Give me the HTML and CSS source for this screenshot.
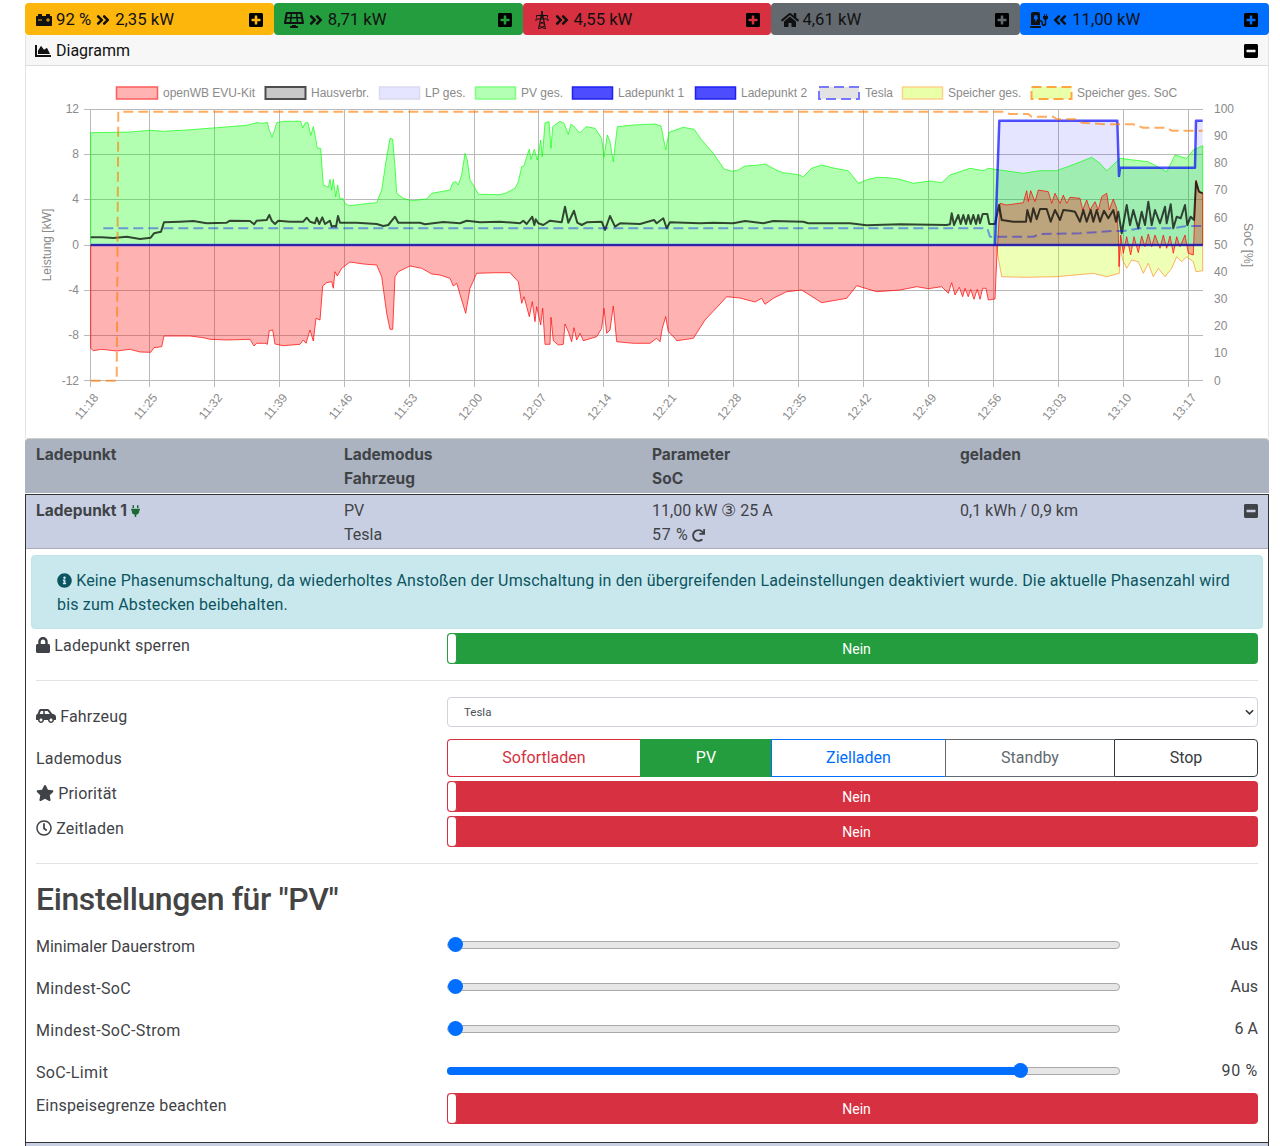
FILE: index.html
```html
<!DOCTYPE html>
<html lang="de">
<head>
    <meta charset="UTF-8">
    <meta name="viewport" content="width=device-width, initial-scale=1.0">
    <title>openWB</title>
    <link rel="stylesheet" href="styles.css">
</head>
<body>
    <svg class="icon-defs" width="0" height="0">
        <symbol id="i-battery" viewBox="0 0 512 512"><path d="M480 128h-32V80c0-8.84-7.16-16-16-16h-96c-8.84 0-16 7.16-16 16v48H192V80c0-8.84-7.16-16-16-16H80c-8.84 0-16 7.16-16 16v48H32c-17.67 0-32 14.33-32 32v256c0 17.67 14.33 32 32 32h448c17.67 0 32-14.33 32-32V160c0-17.67-14.33-32-32-32zM192 264c0 4.42-3.58 8-8 8H72c-4.42 0-8-3.58-8-8v-16c0-4.42 3.58-8 8-8h112c4.42 0 8 3.58 8 8v16zm256 0c0 4.42-3.58 8-8 8h-40v40c0 4.42-3.58 8-8 8h-16c-4.42 0-8-3.58-8-8v-40h-40c-4.42 0-8-3.58-8-8v-16c0-4.42 3.58-8 8-8h40v-40c0-4.42 3.58-8 8-8h16c4.42 0 8 3.58 8 8v40h40c4.42 0 8 3.58 8 8v16z"/></symbol>
        <symbol id="i-solar" viewBox="0 0 640 512"><path d="M431.98 448.01l-47.97.05V416h-128v32.21l-47.98.05c-8.82.01-15.97 7.16-15.98 15.99l-.05 31.73c-.01 8.85 7.17 16.03 16.02 16.02l223.96-.26c8.82-.01 15.97-7.16 15.98-15.98l.04-31.73c.01-8.85-7.17-16.03-16.02-16.02zM585.2 26.74C582.58 11.31 568.99 0 553.06 0H86.93C71 0 57.41 11.31 54.79 26.74-3.32 369.16.04 348.08.03 352c-.03 17.32 14.29 32 32.6 32h574.74c18.23 0 32.51-14.56 32.59-31.79.02-4.08 3.35 16.95-54.76-325.47zM259.83 64h120.33l9.77 96H250.06l9.77-96zm-75.17 256H71.09L90.1 208h105.97l-11.41 112zm16.29-160H98.24l16.29-96h96.19l-9.77 96zm32.82 160l11.4-112h149.65l11.4 112H233.77zm195.5-256h96.19l16.29 96H439.04l-9.77-96zm26.06 256l-11.4-112H549.9l19 112H455.33z"/></symbol>
        <symbol id="i-right" viewBox="0 0 448 512"><path d="M224.3 273l-136 136c-9.4 9.4-24.6 9.4-33.9 0l-22.6-22.6c-9.4-9.4-9.4-24.6 0-33.9l96.4-96.4-96.4-96.4c-9.4-9.4-9.4-24.6 0-33.9L54.3 103c9.4-9.4 24.6-9.4 33.9 0l136 136c9.5 9.4 9.5 24.6.1 34zm192-34l-136-136c-9.4-9.4-24.6-9.4-33.9 0l-22.6 22.6c-9.4 9.4-9.4 24.6 0 33.9l96.4 96.4-96.4 96.4c-9.4 9.4-9.4 24.6 0 33.9l22.6 22.6c9.4 9.4 24.6 9.4 33.9 0l136-136c9.4-9.2 9.4-24.4 0-33.8z"/></symbol>
        <symbol id="i-left" viewBox="0 0 448 512"><path transform="matrix(-1 0 0 1 448 0)" d="M224.3 273l-136 136c-9.4 9.4-24.6 9.4-33.9 0l-22.6-22.6c-9.4-9.4-9.4-24.6 0-33.9l96.4-96.4-96.4-96.4c-9.4-9.4-9.4-24.6 0-33.9L54.3 103c9.4-9.4 24.6-9.4 33.9 0l136 136c9.5 9.4 9.5 24.6.1 34zm192-34l-136-136c-9.4-9.4-24.6-9.4-33.9 0l-22.6 22.6c-9.4 9.4-9.4 24.6 0 33.9l96.4 96.4-96.4 96.4c-9.4 9.4-9.4 24.6 0 33.9l22.6 22.6c9.4 9.4 24.6 9.4 33.9 0l136-136c9.4-9.2 9.4-24.4 0-33.8z"/></symbol>
        <symbol id="i-home" viewBox="0 0 576 512"><path d="M280.37 148.26L96 300.11V464a16 16 0 0 0 16 16l112.06-.29a16 16 0 0 0 15.92-16V368a16 16 0 0 1 16-16h64a16 16 0 0 1 16 16v95.64a16 16 0 0 0 16 16.05L464 480a16 16 0 0 0 16-16V300L295.67 148.26a12.19 12.19 0 0 0-15.3 0zM571.6 251.47L488 182.56V44.05a12 12 0 0 0-12-12h-56a12 12 0 0 0-12 12v72.61L318.47 43a48 48 0 0 0-61 0L4.34 251.47a12 12 0 0 0-1.6 16.9l25.5 31A12 12 0 0 0 45.15 301l235.22-193.74a12.19 12.19 0 0 1 15.3 0L530.9 301a12 12 0 0 0 16.9-1.6l25.5-31a12 12 0 0 0-1.7-16.93z"/></symbol>
        <symbol id="i-station" viewBox="0 0 576 512"><path d="M336 448H16c-8.84 0-16 7.16-16 16v32c0 8.84 7.16 16 16 16h320c8.84 0 16-7.16 16-16v-32c0-8.84-7.16-16-16-16zm208-320V80c0-8.84-7.16-16-16-16s-16 7.16-16 16v48h-32V80c0-8.84-7.16-16-16-16s-16 7.16-16 16v48h-16c-8.84 0-16 7.16-16 16v32c0 35.76 23.62 65.69 56 75.93v118.49c0 13.95-9.5 26.92-23.26 29.19C431.22 402.5 416 388.99 416 372v-28c0-48.6-39.4-88-88-88h-8V64c0-35.35-28.65-64-64-64H96C60.65 0 32 28.65 32 64v352h288V304h8c22.09 0 40 17.91 40 40v24.61c0 39.67 28.92 75.16 68.41 79.01C481.71 452.05 520 416.41 520 372V251.93c32.38-10.24 56-40.17 56-75.93v-32c0-8.84-7.16-16-16-16zM260.09 175.61l-71.37 126.2c-2.53 4.47-7.02 6.19-11.16 6.19-6.98 0-13.29-4.87-11.63-11.55L181.26 232H136c-9.1 0-16.12-8.02-14.87-17.03l16-96C138.18 111.53 144.53 104 152 104h72c10.09 0 17.54 9.36 15.08 19.26L220.77 160h31.28c9.04 0 14.75 9.77 8.04 15.61z"/></symbol>
        <symbol id="i-plus" viewBox="0 0 448 512"><path d="M400 32H48C21.5 32 0 53.5 0 80v352c0 26.5 21.5 48 48 48h352c26.5 0 48-21.5 48-48V80c0-26.5-21.5-48-48-48zm-32 252c0 6.6-5.4 12-12 12h-92v92c0 6.6-5.4 12-12 12h-56c-6.6 0-12-5.4-12-12v-92H92c-6.6 0-12-5.4-12-12v-56c0-6.6 5.4-12 12-12h92v-92c0-6.6 5.4-12 12-12h56c6.6 0 12 5.4 12 12v92h92c6.6 0 12 5.4 12 12v56z"/></symbol>
        <symbol id="i-minus" viewBox="0 0 448 512"><path d="M400 32H48C21.5 32 0 53.5 0 80v352c0 26.5 21.5 48 48 48h352c26.5 0 48-21.5 48-48V80c0-26.5-21.5-48-48-48zM92 296c-6.6 0-12-5.4-12-12v-56c0-6.6 5.4-12 12-12h264c6.6 0 12 5.4 12 12v56c0 6.6-5.4 12-12 12H92z"/></symbol>
    </svg>

    <div class="page">
        <div class="topbar">
            <div class="tile tile-yellow">
                <svg class="ico wide18"><use href="#i-battery"/></svg>
                <span>92 %</span>
                <svg class="ico arrows"><use href="#i-right"/></svg>
                <span>2,35 kW</span>
                <svg class="ico toggle-ico"><use href="#i-plus"/></svg>
            </div>
            <div class="tile tile-green">
                <svg class="ico wide"><use href="#i-solar"/></svg>
                <svg class="ico arrows"><use href="#i-right"/></svg>
                <span>8,71 kW</span>
                <svg class="ico toggle-ico"><use href="#i-plus"/></svg>
            </div>
            <div class="tile tile-red">
                <svg class="ico tower" viewBox="0 0 14 18" fill="none" stroke="currentColor" stroke-width="1">
                    <path d="M7 0 3.5 18M7 0l3.5 18M1.5 4.5h11M1 8h12M1.5 4.5v2M12.5 4.5v2M1 8v2M13 8v2M5.5 4.5 8.5 8M8.5 4.5 5.5 8M5 10.5l4.5 3M9 10.5 4.5 13.5M4 14.5l6 3.5M10 14.5 4 18"/>
                </svg>
                <svg class="ico arrows"><use href="#i-right"/></svg>
                <span>4,55 kW</span>
                <svg class="ico toggle-ico"><use href="#i-plus"/></svg>
            </div>
            <div class="tile tile-grey">
                <svg class="ico home"><use href="#i-home"/></svg>
                <span>4,61 kW</span>
                <svg class="ico toggle-ico"><use href="#i-plus"/></svg>
            </div>
            <div class="tile tile-blue">
                <svg class="ico home"><use href="#i-station"/></svg>
                <svg class="ico arrows"><use href="#i-left"/></svg>
                <span>11,00 kW</span>
                <svg class="ico toggle-ico"><use href="#i-plus"/></svg>
            </div>
        </div>

        <div class="chart-card">
            <div class="chart-head">
                <svg class="ico" viewBox="0 0 512 512"><path d="M500 384c6.6 0 12 5.4 12 12v40c0 6.6-5.4 12-12 12H12c-6.6 0-12-5.4-12-12V76c0-6.6 5.4-12 12-12h40c6.6 0 12 5.4 12 12v308h436zM372.7 159.5L288 216l-85.3-113.7c-5.1-6.8-15.5-6.3-19.9 1L96 248v104h384l-89.9-187.8c-3.2-6.5-11.4-8.7-17.4-4.7z"/></svg>
                <span>Diagramm</span>
                <svg class="ico toggle-ico"><use href="#i-minus"/></svg>
            </div>
            <svg class="chart" viewBox="26 66 1242 372" width="1242" height="372">
                <!-- legend -->
                <g class="legend">
                    <rect x="116.5" y="87" width="41" height="12" fill="#ffb3b3" stroke="#ff5c5c" stroke-width="1.5"/>
                    <text x="163" y="97">openWB EVU-Kit</text>
                    <rect x="265.5" y="87" width="40" height="12" fill="#c8c8c8" stroke="#4d4d4d" stroke-width="2"/>
                    <text x="311" y="97">Hausverbr.</text>
                    <rect x="379.5" y="87" width="40" height="12" fill="#e5e5ff" stroke="#d9d9ef" stroke-width="1.5"/>
                    <text x="425" y="97">LP ges.</text>
                    <rect x="475.5" y="87" width="40" height="12" fill="#b3ffb3" stroke="#80ff80" stroke-width="1.5"/>
                    <text x="521" y="97">PV ges.</text>
                    <rect x="572.5" y="87" width="40" height="12" fill="#4d4dff" stroke="#2020f0" stroke-width="1.5"/>
                    <text x="618" y="97">Ladepunkt 1</text>
                    <rect x="695.5" y="87" width="40" height="12" fill="#4d4dff" stroke="#2020f0" stroke-width="1.5"/>
                    <text x="741" y="97">Ladepunkt 2</text>
                    <rect x="819" y="87" width="40" height="12" fill="#e3e3e3" stroke="#7878ff" stroke-width="2" stroke-dasharray="10 5"/>
                    <text x="865" y="97">Tesla</text>
                    <rect x="902.5" y="87" width="40" height="12" fill="#e9ffa8" stroke="#ffd28c" stroke-width="1.5"/>
                    <text x="948" y="97">Speicher ges.</text>
                    <rect x="1031.5" y="87" width="40" height="12" fill="#e9ffa8" stroke="#ffa640" stroke-width="2" stroke-dasharray="10 5"/>
                    <text x="1077" y="97">Speicher ges. SoC</text>
                </g>

                <!-- grid -->
                <path class="grid" d="M84 109.5H1203M84 154.5H1203M84 199.5H1203M84 245.5H1203M84 290.5H1203M84 335.5H1203M84 380.5H1203M90.5 109V387M149.5 109V387M214.5 109V387M279.5 109V387M344.5 109V387M409.5 109V387M474.5 109V387M538.5 109V387M603.5 109V387M668.5 109V387M733.5 109V387M798.5 109V387M863.5 109V387M928.5 109V387M993.5 109V387M1058.5 109V387M1123.5 109V387M1188.5 109V387"/>

                <!-- axis labels -->
                <g class="tick tick-end">
                    <text x="79" y="113">12</text>
                    <text x="79" y="158">8</text>
                    <text x="79" y="203">4</text>
                    <text x="79" y="249">0</text>
                    <text x="79" y="294">-4</text>
                    <text x="79" y="339">-8</text>
                    <text x="79" y="385">-12</text>
                </g>
                <g class="tick">
                    <text x="1214" y="113">100</text>
                    <text x="1214" y="140">90</text>
                    <text x="1214" y="167">80</text>
                    <text x="1214" y="194">70</text>
                    <text x="1214" y="222">60</text>
                    <text x="1214" y="249">50</text>
                    <text x="1214" y="276">40</text>
                    <text x="1214" y="303">30</text>
                    <text x="1214" y="330">20</text>
                    <text x="1214" y="357">10</text>
                    <text x="1214" y="385">0</text>
                </g>
                <text class="tick tick-mid" transform="translate(51 245) rotate(-90)">Leistung [kW]</text>
                <text class="tick tick-mid" transform="translate(1244 245) rotate(90)">SoC [%]</text>
                <g class="tick tick-end">
                    <text transform="translate(99 398) rotate(-50)">11:18</text>
                    <text transform="translate(158 398) rotate(-50)">11:25</text>
                    <text transform="translate(223 398) rotate(-50)">11:32</text>
                    <text transform="translate(288 398) rotate(-50)">11:39</text>
                    <text transform="translate(353 398) rotate(-50)">11:46</text>
                    <text transform="translate(418 398) rotate(-50)">11:53</text>
                    <text transform="translate(483 398) rotate(-50)">12:00</text>
                    <text transform="translate(547 398) rotate(-50)">12:07</text>
                    <text transform="translate(612 398) rotate(-50)">12:14</text>
                    <text transform="translate(677 398) rotate(-50)">12:21</text>
                    <text transform="translate(742 398) rotate(-50)">12:28</text>
                    <text transform="translate(807 398) rotate(-50)">12:35</text>
                    <text transform="translate(872 398) rotate(-50)">12:42</text>
                    <text transform="translate(937 398) rotate(-50)">12:49</text>
                    <text transform="translate(1002 398) rotate(-50)">12:56</text>
                    <text transform="translate(1067 398) rotate(-50)">13:03</text>
                    <text transform="translate(1132 398) rotate(-50)">13:10</text>
                    <text transform="translate(1197 398) rotate(-50)">13:17</text>
                </g>

                <!-- Speicher ges. -->
                <path class="area-bat" d="M996 245 1001.7,276.7 1025,277.3 1056.7,276.7 1093.3,273.3 1106.7,276.7 1119.3,273.3 1120,246.7 1122.7,260 1126.7,268.3 1131.7,260 1138.3,261.7 1143.3,273.3 1148.3,263.3 1153.3,276.7 1158.3,268.3 1165,276.7 1171.7,268.3 1176.7,256.7 1181.7,261.7 1186.7,256.7 1193.3,261.7 1196,271.7 1202.7,270.7V245Z"/>
                <!-- LP ges. -->
                <path class="area-lp" d="M995 245 999.3,120.7 1117.3,120.7 1119,176 1120,167.7 1195,167.7 1196,120.7 1202.7,120.7V245Z"/>
                <!-- PV ges. -->
                <path class="area-pv" d="M90.7,245V132.7L116.7,132.3 130,132 150,130.3 163.3,131.3 186.7,130 216.7,127.7 246.7,125.3 256.7,122.7 263.3,123.3 267.3,122.3 269.3,130 272,137.3 274,131.7 276.7,122.7 283.3,121.3 300.7,121.3 302.7,128 305.3,122.7 308,122.7 310.7,135.3 313.3,126.7 315.3,136.7 317.3,148.3 320.7,148.3 323.3,185 328.3,187.3 330,179.3 331.7,190 333.3,179.3 335.7,196.7 337.7,185 340,199.3 342.7,198.3 345,203.3 349.3,205.7 363.3,204 376.7,202.7 381.7,190 386.7,156.7 390,138.3 392.7,139.3 395,166.7 396.7,193.3 403.3,198.3 411.7,200.7 426.7,199 431.7,193.3 450,190 452.7,182.7 456,181.7 458.3,185 461.7,175 465,153.3 467.3,160 470,180 473.3,185 478.3,194.3 500,194.7 506.7,192.7 515,188.3 518.3,181.7 521.7,166.7 524,166 526.7,156.7 529.3,149.3 531,159.3 534.3,149.3 537.3,160 540.7,140 542.3,156.7 545,122.7 549,121.7 551,148.3 552.7,126.7 560,121.3 564,123.3 568.3,134.3 571,124 575,127.3 577.3,130.7 580,132.7 586,126.7 595,128.3 601.7,138.3 604,157.3 607.3,135 610,141.7 613.3,161.7 617.3,126.7 633.3,125 655,124 661,126 665.7,150 669,132.3 683.3,127.3 694,129.3 701.7,140 713.3,153.3 724,169 732.3,171.3 738.3,170 745,166 756.7,165.3 765,164 778.3,171 783.3,172.7 798.3,174.7 803.3,176.7 811.7,168.3 821.7,165 835,168.3 848.3,170.7 858.3,183.3 868.3,179.3 876.7,177.3 888.3,177.7 900,179.3 913.3,183.3 930,181 941.7,182.7 950,175 970,168.3 983.3,170.7 988.3,168.3 1000,170 1023.3,173.3 1040,170.7 1056.7,170.7 1076.7,163.3 1091.7,157.3 1100,163.3 1106.7,171 1120,158.3 1133.3,160 1148.3,161.7 1166.7,171.7 1175,155 1186.7,158.3 1193.3,150 1202.7,145.7V245Z"/>
                <!-- openWB EVU-Kit -->
                <path class="area-evu" d="M90.7,245V348.3L93.3,350.7 101.7,349.3 116.7,351 130,349.3 140,352 150.7,352.3 154,347.7 161.7,346.7 164,336 176.7,336 190,336 203.3,337.7 210,339.3 226.7,340 250,339.3 254,346 256.7,343.3 265,343.3 267.3,344.3 269.3,330.7 272.7,330 275,344 283.3,345.7 300,344.3 303.3,340 306,343.3 310,330 313.3,341 316,318.3 320,320 322.7,286 326.7,282.7 331.7,281.7 333.3,288.3 335,271.7 337.3,276 341.7,268.3 350,262 363.3,264 376.7,265 381.7,276.7 386.7,313.3 390,329.3 392.7,329.3 395,276.7 398.3,271.7 410,266 421.7,268.3 431.7,274 440,275 450,278.3 453.3,286 456.7,283.3 461.7,300 465.7,313.3 470,288.3 476.7,273.3 496.7,272.7 510,272.7 518.3,281.7 521.7,303.3 524,296.7 526.7,306.7 529.3,316.7 532.3,301.7 535,321.7 536.7,306.7 540.7,325 542.7,308.3 545,344.3 550,344.3 551,317.3 553.3,340.7 558.3,345 563.3,344.3 565,324 568.3,331.7 571.7,341.7 574,327.7 576.7,340 580,333.3 583.3,340.7 596.7,336.7 601.7,328.3 604,308.3 606.7,333.3 610,330 613.3,306 616.7,341.7 633.3,343.3 650,343.3 656.7,338.3 660,341.7 662.3,328.3 665.7,316.7 668.3,331.7 675,338.3 676.7,340.7 693.3,338.3 705,320 720,304 726.7,296.7 740,298 755,302 761.7,298.3 765,304.3 773.3,298.3 786.7,291.7 801.7,290 821.7,302.7 846.7,298.3 856.7,285.7 876.7,291.7 900,290 916.7,286.7 928.3,288.7 941.7,286.7 948.3,293.3 951.7,282.7 955,295 959.3,287.3 962.7,296.7 965,288.3 968.3,296.7 970.7,289.3 974,299.3 977.3,289.3 980,299.3 982.7,288.3 986,288.3 988.3,300 995,299 996.7,260 1000,203.3 1006.7,205 1023.3,202.7 1026.7,190.7 1028.3,201.7 1030.7,190.7 1035,201.7 1038.3,190 1048.3,191.7 1051.7,203.3 1055,193.3 1060,203.3 1063.3,195 1066.7,203.3 1070,197.3 1080,198.3 1082.7,210 1086.7,200 1090,210 1095,201.7 1098.3,210 1101.7,196.7 1106.7,193.3 1109.3,210 1113.3,199 1116.7,208.3 1118.3,233.3 1119,266.7 1120.7,235 1123.3,253.3 1126.7,236.7 1130.7,255 1134,236.7 1138.3,252.7 1141.7,236 1145,246.7 1148.3,234 1151.7,246.7 1155,235 1160,248.3 1163.3,235 1166.7,248.3 1170,236 1173.3,253.3 1176.7,236.7 1180,246.7 1185,235 1188.3,253.3 1193.3,255 1196,180 1199,191.7 1202.7,193.3V245Z"/>
                <!-- Hausverbr. -->
                <polyline class="line-house" points="90.7,237.3 101.7,237.3 113.3,238 126.7,236.7 140,239 150.7,237.7 154,233.3 161,231.7 164,222.3 180,221.7 193.3,221 206.7,223.3 226.7,222.7 230,220.7 250,221 254,224.3 256.7,220.7 266.7,220 269.3,215 271.7,220.7 275,224 278.3,220.7 290,221.7 303.3,221.7 306.7,217.7 310,221.7 315,223.3 316.7,217.7 319.3,224 322.3,217.3 325,224 330,220.7 331.7,226.7 334,226 336,226.7 338,216 340,222.7 356.7,222.7 376.7,224 383.3,226 388.3,225 395,216.7 398.3,222.7 420,222.7 425,224.3 443.3,222 460,223.3 466.7,220.7 480,222.3 500,221.7 520,223.3 523.3,220.7 526.7,224 532.3,216.7 534.3,225 535.7,219.3 538.3,223.3 543.3,225 550,220.7 561.7,222.3 565,206.7 568.3,222.7 574,210.7 577.3,222.7 581.7,225 586.7,222.3 601.7,221.7 605,230 610,216 615,226.7 620,223.3 640,224 654,220 656.7,223.3 663.3,218.3 666.7,228.3 670,222.3 700,223.3 713.3,222.7 733.3,223.3 745,221 763.3,223.3 773.3,221 803.3,221.7 808.3,223.3 850,223.3 866.7,225.3 900,224.3 946.7,225 950,224.3 951.7,213.3 954,225 958.3,215 960.7,224 963.3,215 966,224 968.3,215 970.7,224 973.3,215 976,224 978.3,215 980,223.3 982.7,214 987.3,214 989.3,224 995,224 999,205 1001.7,220 1013.3,221.7 1026,221.7 1027.3,210 1030.7,221.7 1033.3,208.3 1036.7,219.3 1040,209 1046.7,209 1050.7,221.7 1055,210 1060,220 1063.3,210 1070,210.7 1075,211.7 1080,221.7 1083.3,210 1086.7,221.7 1090.7,210 1093.3,221.7 1096.7,210 1100,221.7 1104,210.7 1108.3,218.3 1113.3,210 1116,221.7 1118.3,211.7 1121.7,233.3 1126.7,205 1130,225 1133.3,210 1138.3,228.3 1141.7,211.7 1145,225 1148.3,201.7 1151.7,225 1155,210 1160,223.3 1165,206.7 1166.7,223.3 1170.7,204.3 1173.3,228.3 1176.7,216.7 1180.7,218.3 1185,205 1187.3,225 1190.7,216.7 1194,220 1196,181.7 1199,191.7 1202.7,193.3"/>
                <!-- Ladepunkt 1 -->
                <polyline class="line-lp" points="995,245 999.3,120.7 1117.3,120.7 1119,176 1120,167.7 1195,167.7 1196,120.7 1202.7,120.7"/>
                <!-- Ladepunkt 2 -->
                <path class="line-lp" d="M90.7 245H1202.7"/>
                <path class="line-zero" d="M90.7 245H1202.7"/>
                <!-- Tesla SoC -->
                <polyline class="line-soc" points="103.3,228.3 987.3,228.3 990,236.7 1033.3,236.7 1040,234 1080,233.3 1113.3,231 1123.3,231 1140,228.3 1173.3,228.3 1186.7,226 1202.7,226"/>
                <!-- Speicher ges. SoC -->
                <polyline class="line-batsoc" points="90.7,380.7 116.7,380.7 118.3,111.7 1003.3,111.7 1010,114 1028.3,114 1031.7,116.7 1053.3,116.7 1056.7,119.3 1076.7,119.3 1081.7,122.7 1106.7,124.3 1133.3,124.3 1143.3,127.7 1166.7,127.7 1171.7,130.7 1202.7,130.7"/>
            </svg>
        </div>

        <div class="lp-grid lp-head">
            <div>Ladepunkt</div>
            <div>Lademodus<br>Fahrzeug</div>
            <div>Parameter<br>SoC</div>
            <div>geladen</div>
        </div>

        <div class="lp-panel">
            <div class="lp-grid lp-row">
                <div class="lp-name">Ladepunkt 1 <svg class="ico plug" viewBox="0 0 384 512"><path d="M320,32a32,32,0,0,0-64,0v96h64Zm48,128H16A16,16,0,0,0,0,176v32a16,16,0,0,0,16,16H32v32A160.07,160.07,0,0,0,160,412.8V512h64V412.8A160.07,160.07,0,0,0,352,256V224h16a16,16,0,0,0,16-16V176A16,16,0,0,0,368,160ZM128,32a32,32,0,0,0-64,0v96h64Z"/></svg></div>
                <div>PV<br>Tesla</div>
                <div>11,00 kW <span class="phase">③</span> 25 A<br><span class="soc-value">57 %</span> <svg class="ico redo" viewBox="0 0 512 512"><path d="M500.33 0h-47.41a12 12 0 0 0-12 12.57l4 82.76A247.42 247.42 0 0 0 256 8C119.34 8 7.9 119.53 8 256.19 8.1 393.07 119.1 504 256 504a247.1 247.1 0 0 0 166.18-63.91 12 12 0 0 0 .48-17.43l-34-34a12 12 0 0 0-16.38-.55A176 176 0 1 1 402.1 157.8l-101.53-4.87a12 12 0 0 0-12.57 12v47.41a12 12 0 0 0 12 12h200.33a12 12 0 0 0 12-12V12a12 12 0 0 0-12-12z"/></svg></div>
                <div class="lp-loaded">0,1 kWh / 0,9 km <svg class="ico lp-toggle"><use href="#i-minus"/></svg></div>
            </div>

            <div class="lp-body">
                <div class="alert-info">
                    <svg class="ico" viewBox="0 0 512 512"><path d="M256 8C119.043 8 8 119.083 8 256c0 136.997 111.043 248 248 248s248-111.003 248-248C504 119.083 392.957 8 256 8zm0 110c23.196 0 42 18.804 42 42s-18.804 42-42 42-42-18.804-42-42 18.804-42 42-42zm56 254c0 6.627-5.373 12-12 12h-88c-6.627 0-12-5.373-12-12v-24c0-6.627 5.373-12 12-12h12v-64h-12c-6.627 0-12-5.373-12-12v-24c0-6.627 5.373-12 12-12h64c6.627 0 12 5.373 12 12v100h12c6.627 0 12 5.373 12 12v24z"/></svg>
                    Keine Phasenumschaltung, da wiederholtes Anstoßen der Umschaltung in den übergreifenden Ladeinstellungen deaktiviert wurde. Die aktuelle Phasenzahl wird bis zum Abstecken beibehalten.
                </div>

                <div class="form-row first-row">
                    <label class="label-top"><svg class="ico lock" viewBox="0 0 448 512"><path d="M400 224h-24v-72C376 68.2 307.8 0 224 0S72 68.2 72 152v72H48c-26.5 0-48 21.5-48 48v192c0 26.5 21.5 48 48 48h352c26.5 0 48-21.5 48-48V272c0-26.5-21.5-48-48-48zm-104 0H152v-72c0-39.7 32.3-72 72-72s72 32.3 72 72v72z"/></svg> Ladepunkt sperren</label>
                    <div class="switch switch-green"><span class="knob"></span><span class="switch-text">Nein</span></div>
                </div>

                <hr>

                <div class="form-row">
                    <label class="label-car"><svg class="ico car" viewBox="0 0 640 512"><path d="M544 192h-16L419.22 56.02A64.025 64.025 0 0 0 369.24 32H155.33c-26.17 0-49.7 15.93-59.42 40.23L48 194.26C20.44 201.4 0 226.21 0 256v112c0 8.84 7.16 16 16 16h48c0 53.02 42.98 96 96 96s96-42.98 96-96h128c0 53.02 42.98 96 96 96s96-42.98 96-96h48c8.84 0 16-7.16 16-16v-80c0-53.02-42.98-96-96-96zM160 432c-26.47 0-48-21.53-48-48s21.53-48 48-48 48 21.53 48 48-21.53 48-48 48zm72-240H116.93l38.4-96H232v96zm48 0V96h89.24l76.8 96H280zm200 240c-26.47 0-48-21.53-48-48s21.53-48 48-48 48 21.53 48 48-21.53 48-48 48z"/></svg> Fahrzeug</label>
                    <div class="select-box">
                        <select class="car-select"><option>Tesla</option></select>
                        <svg class="chevron" viewBox="0 0 10 6" fill="none" stroke="#343a40" stroke-width="1.8"><path d="M1 1l4 4 4-4"/></svg>
                    </div>
                </div>

                <div class="form-row mode-row">
                    <label class="label-mid">Lademodus</label>
                    <div class="mode-group">
                        <div class="mode mode-red">Sofortladen</div>
                        <div class="mode mode-on">PV</div>
                        <div class="mode mode-blue">Zielladen</div>
                        <div class="mode mode-grey">Standby</div>
                        <div class="mode mode-dark">Stop</div>
                    </div>
                </div>

                <div class="form-row gap-row">
                    <label class="label-top"><svg class="ico star" viewBox="0 0 576 512"><path d="M259.3 17.8L194 150.2 47.9 171.5c-26.2 3.8-36.7 36.1-17.7 54.6l105.7 103-25 145.5c-4.5 26.3 23.2 46 46.4 33.7L288 439.6l130.7 68.7c23.2 12.2 50.9-7.4 46.4-33.7l-25-145.5 105.7-103c19-18.5 8.5-50.8-17.7-54.6L382 150.2 316.7 17.8c-11.7-23.6-45.6-23.9-57.4 0z"/></svg> Priorität</label>
                    <div class="switch switch-red"><span class="knob"></span><span class="switch-text">Nein</span></div>
                </div>
                <div class="form-row gap-row">
                    <label class="label-top"><svg class="ico" viewBox="0 0 512 512"><path d="M256 8C119 8 8 119 8 256s111 248 248 248 248-111 248-248S393 8 256 8zm0 448c-110.5 0-200-89.5-200-200S145.5 56 256 56s200 89.5 200 200-89.5 200-200 200zm61.8-104.4l-84.9-61.7c-3.1-2.3-4.9-5.9-4.9-9.7V116c0-6.6 5.4-12 12-12h32c6.6 0 12 5.4 12 12v141.7l66.8 48.6c5.4 3.9 6.5 11.4 2.6 16.8L334.6 349c-3.9 5.3-11.4 6.5-16.8 2.6z"/></svg> Zeitladen</label>
                    <div class="switch switch-red"><span class="knob"></span><span class="switch-text">Nein</span></div>
                </div>

                <hr>

                <h2>Einstellungen für "PV"</h2>

                <div class="slider-row">
                    <label class="label-tight">Minimaler Dauerstrom</label>
                    <div class="track"><span class="thumb" style="left: 0px"></span></div>
                    <div class="value">Aus</div>
                </div>
                <div class="slider-row">
                    <label>Mindest-SoC</label>
                    <div class="track"><span class="thumb" style="left: 0px"></span></div>
                    <div class="value">Aus</div>
                </div>
                <div class="slider-row">
                    <label>Mindest-SoC-Strom</label>
                    <div class="track"><span class="thumb" style="left: 0px"></span></div>
                    <div class="value">6 A</div>
                </div>
                <div class="slider-row">
                    <label>SoC-Limit</label>
                    <div class="track"><span class="fill" style="width: 572px"></span><span class="thumb" style="left: 565px"></span></div>
                    <div class="value soc-value">90 %</div>
                </div>

                <div class="form-row last-row">
                    <label class="label-top">Einspeisegrenze beachten</label>
                    <div class="switch switch-red"><span class="knob"></span><span class="switch-text">Nein</span></div>
                </div>
            </div>
        </div>
        <div class="lp-next"></div>
    </div>
</body>
</html>
```

FILE: styles.css
```css
html, body {
    margin: 0;
    padding: 0;
    height: 1146px;
    overflow: hidden;
    background-color: #fff;
}

body {
    font-family: Roboto, "Liberation Sans", sans-serif;
    font-size: 16px;
    line-height: 24px;
    color: #3f4347;
}

.icon-defs {
    position: absolute;
}

.page {
    padding: 3px 11px 0 25px;
}

.ico {
    display: inline-block;
    width: 16px;
    height: 16px;
    fill: currentColor;
    vertical-align: -2px;
}

/* top tiles */
.topbar {
    display: grid;
    grid-template-columns: repeat(5, 1fr);
}

.tile {
    display: flex;
    align-items: center;
    gap: 3px;
    height: 32px;
    padding: 1px 10px 0;
    box-sizing: border-box;
    border-radius: 4px;
    font-size: 16.7px;
    color: #111;
}

.tile-yellow { background-color: #fdb60c; }
.tile-green { background-color: #249d3f; }
.tile-red { background-color: #d73040; }
.tile-grey { background-color: #62696f; }
.tile-blue { background-color: #006eff; }

.tile .wide18 { width: 18px; }
.tile .wide { width: 20px; }
.tile .home { width: 18px; }
.tile .tower { width: 14px; height: 18px; margin: 0 1px 0 2px; }
.tile .arrows { width: 14px; margin: 0 2px; }

.toggle-ico {
    margin-left: auto;
    color: #000;
}

/* chart */
.chart-card {
    border-right: 1px solid #e3e3e3;
    border-left: 1px solid #e3e3e3;
}

.chart-head {
    display: flex;
    align-items: center;
    gap: 5px;
    height: 28px;
    padding: 2px 9px 0;
    background-color: #f7f7f7;
    border-bottom: 1px solid #dcdcdc;
    color: #111;
}

.chart {
    display: block;
}

.legend text,
.tick text,
text.tick {
    font-family: "Liberation Sans", Arial, sans-serif;
    font-size: 12px;
    fill: #8a8a8a;
}

.tick-end text { text-anchor: end; }
text.tick-mid { text-anchor: middle; }

.grid {
    fill: none;
    stroke: #bababa;
    stroke-width: 1;
}

.area-pv { fill: rgba(0, 255, 0, 0.3); stroke: rgba(0, 255, 0, 0.65); stroke-width: 1; }
.area-evu { fill: rgba(255, 0, 0, 0.3); stroke: rgba(255, 0, 0, 0.7); stroke-width: 1; }
.area-lp { fill: rgba(0, 0, 255, 0.1); stroke: none; }
.area-bat { fill: rgba(200, 255, 13, 0.3); stroke: rgba(255, 128, 13, 0.6); stroke-width: 1; }

.line-house,
.line-lp,
.line-soc,
.line-batsoc {
    fill: none;
    stroke-width: 2;
    stroke-linejoin: round;
}

.line-house { stroke: rgba(0, 0, 0, 0.72); }
.line-lp { stroke: rgba(0, 0, 255, 0.68); stroke-width: 2.5; }
.line-zero { fill: none; stroke: #23238f; stroke-width: 1.2; }
.line-soc { stroke: rgba(0, 0, 255, 0.4); stroke-dasharray: 10 5; }
.line-batsoc { stroke: rgba(255, 128, 13, 0.65); stroke-dasharray: 10 5; }

/* charge point table */
.lp-grid {
    display: grid;
    grid-template-columns: repeat(4, 308px);
    padding: 4px 0 2px 10px;
}

.lp-head {
    height: 48px;
    padding-left: 11px;
    border-radius: 4px 4px 0 0;
    background-color: #acb3c0;
    border-top: 1px solid #cfcfcf;
    font-family: Inter, Roboto, sans-serif;
    font-size: 15.5px;
    font-weight: 700;
}

.lp-panel {
    height: 647px;
    margin-top: 1px;
    border: 1px solid #333;
    border-bottom: 0;
}

.lp-row {
    height: 47px;
    background-color: #c9cfe2;
    border-bottom: 1px solid #a9adbc;
}

.lp-name {
    font-family: Inter, Roboto, sans-serif;
    font-size: 15.5px;
    font-weight: 700;
}

.plug {
    width: 9px;
    height: 12px;
    color: #1a6b32;
    vertical-align: -1px;
}

.phase {
    font-size: 17px;
    line-height: 1;
}

.soc-value {
    letter-spacing: 0.7px;
}

.redo {
    width: 13px;
    height: 13px;
    vertical-align: -2px;
}

.lp-loaded {
    display: flex;
    justify-content: space-between;
    height: 24px;
    align-items: center;
    padding-right: 9px;
}

.lp-toggle {
    color: #3f4347;
}

.lp-body {
    padding: 6px 10px 0;
}

.alert-info {
    margin: 0 -5px;
    padding: 13px 20px 11px 25px;
    background-color: #c9e8ee;
    border: 1px solid #bee5eb;
    border-radius: 4px;
    color: #0c5460;
    letter-spacing: 0.17px;
}

.alert-info .ico {
    width: 15px;
    height: 15px;
    vertical-align: -2px;
}

.form-row {
    display: grid;
    grid-template-columns: 411px 1fr;
    letter-spacing: 0.2px;
}

.first-row { margin-top: 4px; }
.mode-row { margin-top: 12px; }
.gap-row { margin-top: 4px; }
.last-row { margin-top: -6px; }

.label-top { padding-top: 1px; }
.label-car { padding-top: 8px; height: 30px; box-sizing: border-box; }
.label-mid { align-self: center; padding-top: 1px; }

.lock { width: 14px; }
.star { width: 18px; }
.car { width: 20px; }

.switch {
    display: flex;
    align-items: center;
    height: 31px;
    border-radius: 4px;
    font-size: 14px;
    letter-spacing: 0;
    color: #fff;
}

.switch-green { background-color: #249d3f; }
.switch-red { background-color: #d73040; }

.knob {
    width: 8px;
    height: 29px;
    background-color: #fff;
    border: 1px solid;
    border-radius: 4px;
}

.switch-green .knob { border-color: #249d3f; }
.switch-red .knob { border-color: #d73040; }

.switch-text {
    flex: 1;
    padding-right: 2px;
    text-align: center;
}

hr {
    height: 1px;
    margin: 16px 0;
    border: 0;
    background-color: #e3e3e3;
}

.select-box {
    position: relative;
}

.car-select {
    display: block;
    width: 100%;
    height: 30px;
    padding: 0 16px;
    appearance: none;
    background-color: #fff;
    border: 1px solid #ced4da;
    border-radius: 4px;
    font-family: Roboto, sans-serif;
    font-size: 11.5px;
    color: #495057;
}

.chevron {
    position: absolute;
    top: 12px;
    right: 4px;
    width: 9px;
    height: 6px;
}

.mode-group {
    display: grid;
    grid-template-columns: 193px 131px 174px 169px 144px;
    letter-spacing: 0;
}

.mode {
    height: 38px;
    line-height: 36px;
    text-align: center;
    border: 1px solid;
    border-right-width: 0;
    box-sizing: border-box;
    background-color: #fff;
}

.mode-red { color: #d73040; border-color: #d73040; border-radius: 4px 0 0 4px; }
.mode-on { color: #fff; background-color: #249d3f; border-color: #249d3f; }
.mode-blue { color: #006eff; border-color: #006eff; }
.mode-grey { color: #62696f; border-color: #62696f; }
.mode-dark { color: #343a40; border-color: #343a40; border-right-width: 1px; border-radius: 0 4px 4px 0; }

h2 {
    margin: 16px 0 13px;
    font-size: 32px;
    font-weight: 500;
    line-height: 38px;
    letter-spacing: -0.4px;
    color: #444;
}

.slider-row {
    display: grid;
    grid-template-columns: 411px 673px 1fr;
    align-items: center;
    height: 24px;
    margin-bottom: 18px;
}

.slider-row label {
    padding-top: 4px;
    letter-spacing: 0.35px;
}

.slider-row .label-tight {
    letter-spacing: 0;
}

.slider-row .value {
    text-align: right;
}

.track {
    position: relative;
    box-sizing: border-box;
    height: 8px;
    background-color: #e6e6e6;
    border: 1px solid #aaa;
    border-radius: 4px;
}

.fill {
    position: absolute;
    top: -1px;
    left: -1px;
    height: 8px;
    background-color: #006eff;
    border-radius: 4px;
}

.thumb {
    position: absolute;
    top: -5px;
    width: 15px;
    height: 15px;
    background-color: #006eff;
    border-radius: 50%;
}

.lp-next {
    height: 4px;
    background-color: #c9cfe2;
    border-top: 1px solid #333;
    border-right: 1px solid #333;
    border-left: 1px solid #333;
}
```
